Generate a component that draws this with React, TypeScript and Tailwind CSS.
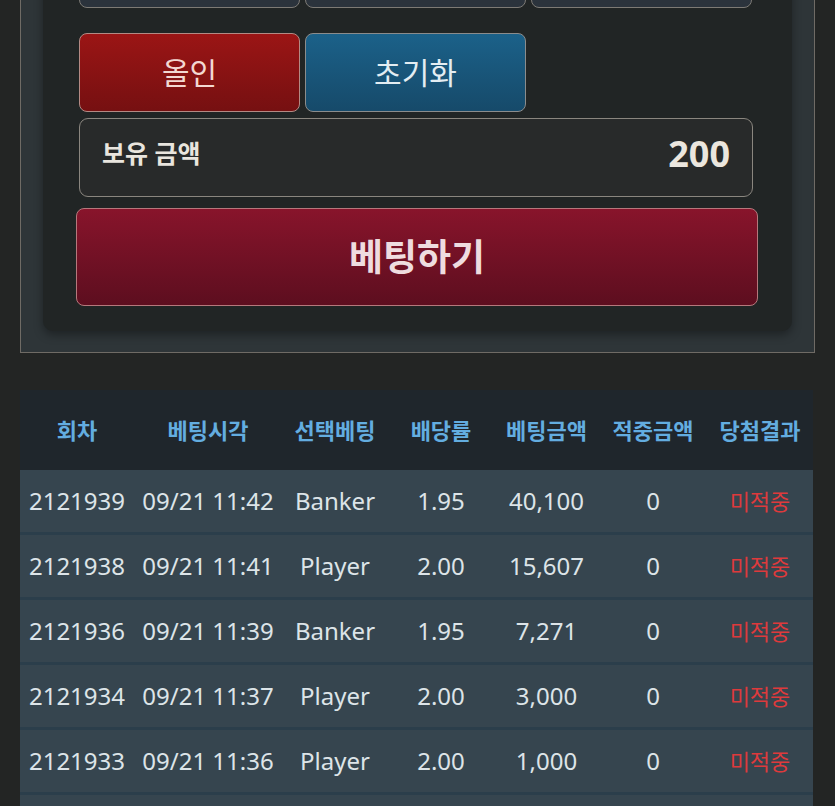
type BetRow = {
  round: string;
  time: string;
  pick: string;
  odds: string;
  amount: string;
  win: string;
  result: string;
};

const rows: BetRow[] = [
  { round: "2121939", time: "09/21 11:42", pick: "Banker", odds: "1.95", amount: "40,100", win: "0", result: "미적중" },
  { round: "2121938", time: "09/21 11:41", pick: "Player", odds: "2.00", amount: "15,607", win: "0", result: "미적중" },
  { round: "2121936", time: "09/21 11:39", pick: "Banker", odds: "1.95", amount: "7,271", win: "0", result: "미적중" },
  { round: "2121934", time: "09/21 11:37", pick: "Player", odds: "2.00", amount: "3,000", win: "0", result: "미적중" },
  { round: "2121933", time: "09/21 11:36", pick: "Player", odds: "2.00", amount: "1,000", win: "0", result: "미적중" },
];

const headers = ["회차", "베팅시각", "선택베팅", "배당률", "베팅금액", "적중금액", "당첨결과"];

const font = "font-['Noto_Sans','Noto_Sans_CJK_KR',sans-serif]";

function BetPanel() {
  return (
    <div className="-mt-[100px] mx-[20px] border-[1.5px] border-[#6f6b65] bg-[#2e3538] px-[22px] pb-[21px]">
      <div className="rounded-b-[10px] bg-[#212525] pb-[25px] pl-[36px] pr-[34px] pt-[29px] shadow-[0_4px_10px_rgba(0,0,0,0.35)]">
        <div className="flex gap-[5px]">
          {[0, 1, 2].map((i) => (
            <div
              key={i}
              className="h-[78px] w-[221px] rounded-[8px] border-[1.5px] border-[#7d7a75] bg-[#2b333c]"
            />
          ))}
        </div>

        <div className="mt-[25px] flex gap-[5px]">
          <button className="flex h-[79px] w-[221px] items-center justify-center rounded-[8px] border-[1.5px] border-[#b48a84] bg-gradient-to-b from-[#9b1515] to-[#761011] text-[30px] text-[#f3d8d2]">
            올인
          </button>
          <button className="flex h-[79px] w-[221px] items-center justify-center rounded-[8px] border-[1.5px] border-[#8b8c8c] bg-gradient-to-b from-[#1b6189] to-[#164a6a] text-[30px] text-[#e3edf2]">
            초기화
          </button>
        </div>

        <div className="mt-[6px] flex h-[79px] w-[674px] items-center justify-between rounded-[9px] border-[1.5px] border-[#8a867f] bg-[#282a2a] pb-[8px] pl-[22px] pr-[22px]">
          <span className="text-[25px] font-bold text-[#e9e5de]">보유 금액</span>
          <span className="text-[36px] font-bold text-[#ebe6de]">200</span>
        </div>

        <button className="-ml-[3px] mt-[11px] flex h-[98px] w-[682px] items-center justify-center rounded-[8px] border-[1.5px] border-[#b5787c] bg-gradient-to-b from-[#88142b] to-[#5d0e1f] text-[37px] font-bold text-[#efdcdf]">
          베팅하기
        </button>
      </div>
    </div>
  );
}

function HistoryTable() {
  const widths = ["w-[114px]", "w-[148px]", "w-[106px]", "w-[106px]", "w-[105px]", "w-[108px]", "w-[106px]"];
  return (
    <div className="mx-[20px] mt-[37px] w-[793px]">
      <div className="flex h-[80px] items-center bg-[#1f262c]">
        {headers.map((h, i) => (
          <div key={h} className={`${widths[i]} whitespace-nowrap text-center text-[22px] font-bold text-[#63ade0]`}>
            {h}
          </div>
        ))}
      </div>
      {rows.map((r) => {
        const cells = [r.round, r.time, r.pick, r.odds, r.amount, r.win];
        return (
          <div key={r.round} className="flex h-[65px] items-center border-b-[3px] border-[#2b3e4b] bg-[#36454f]">
            {cells.map((c, i) => (
              <div key={i} className={`${widths[i]} whitespace-nowrap text-center text-[24px] text-[#dde4e8]`}>
                {c}
              </div>
            ))}
            <div className={`${widths[6]} text-center text-[22px] text-[#de3a3c]`}>{r.result}</div>
          </div>
        );
      })}
      {/* next row continues below the fold */}
      <div className="h-[65px] bg-[#36454f]" />
    </div>
  );
}

export default function App() {
  return (
    <div className={`h-[806px] w-[835px] overflow-hidden bg-[#232524] ${font}`}>
      <BetPanel />
      <HistoryTable />
    </div>
  );
}
